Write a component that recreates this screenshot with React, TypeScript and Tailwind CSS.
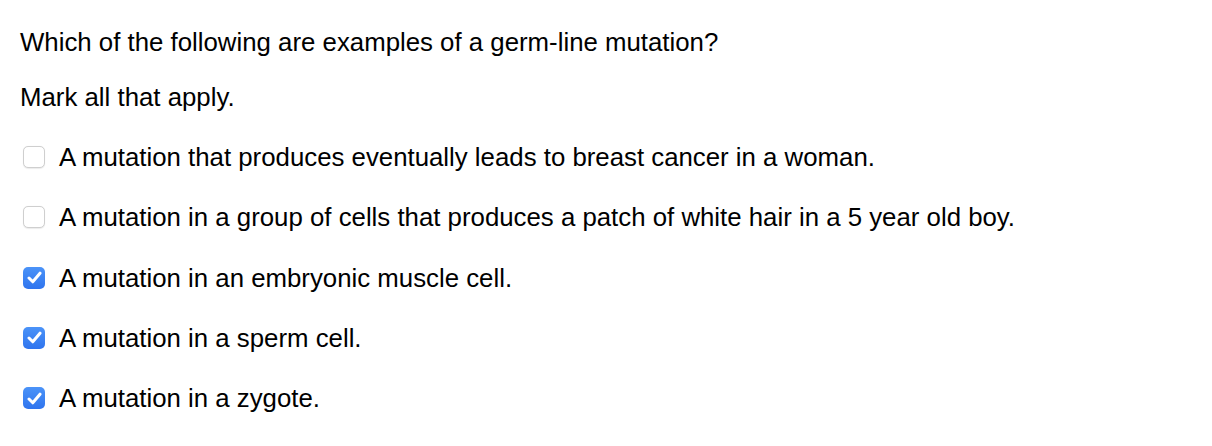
import React from 'react';

const options = [
    { text: 'A mutation that produces eventually leads to breast cancer in a woman.', checked: false },
    { text: 'A mutation in a group of cells that produces a patch of white hair in a 5 year old boy.', checked: false },
    { text: 'A mutation in an embryonic muscle cell.', checked: true },
    { text: 'A mutation in a sperm cell.', checked: true },
    { text: 'A mutation in a zygote.', checked: true },
];

function Box({ checked }: { checked: boolean }) {
    if (checked) {
        return (
            <span className="flex h-[22px] w-[22px] shrink-0 items-center justify-center rounded-[5px] bg-gradient-to-b from-[#4b93f8] to-[#2f74ee]">
                <svg width="15" height="13" viewBox="0 0 15 13" fill="none">
                    <path d="M2 7 L5.8 10.8 L13 2.2" stroke="white" strokeWidth="3" strokeLinecap="round" strokeLinejoin="round" />
                </svg>
            </span>
        );
    }
    return <span className="h-[22px] w-[22px] shrink-0 rounded-[5px] border border-[#cfcfcf] bg-white shadow-[0_0.5px_1px_rgba(0,0,0,0.08)]" />;
}

export default function App() {
    return (
        <div className="min-h-[446px] bg-white px-5 pt-[28px] text-[25.8px] text-black" style={{ fontFamily: '"Liberation Sans", Arial, sans-serif' }}>
            <p className="leading-[28px]">Which of the following are examples of a germ-line mutation?</p>
            <p className="mt-[27px] leading-[28px]">Mark all that apply.</p>
            <div className="mt-[32px] flex flex-col gap-[32.3px]">
                {options.map((o, i) => (
                    <label key={i} className="flex items-center gap-[14px] pl-[3px] leading-[28px]">
                        <Box checked={o.checked} />
                        <span>{o.text}</span>
                    </label>
                ))}
            </div>
        </div>
    );
}
